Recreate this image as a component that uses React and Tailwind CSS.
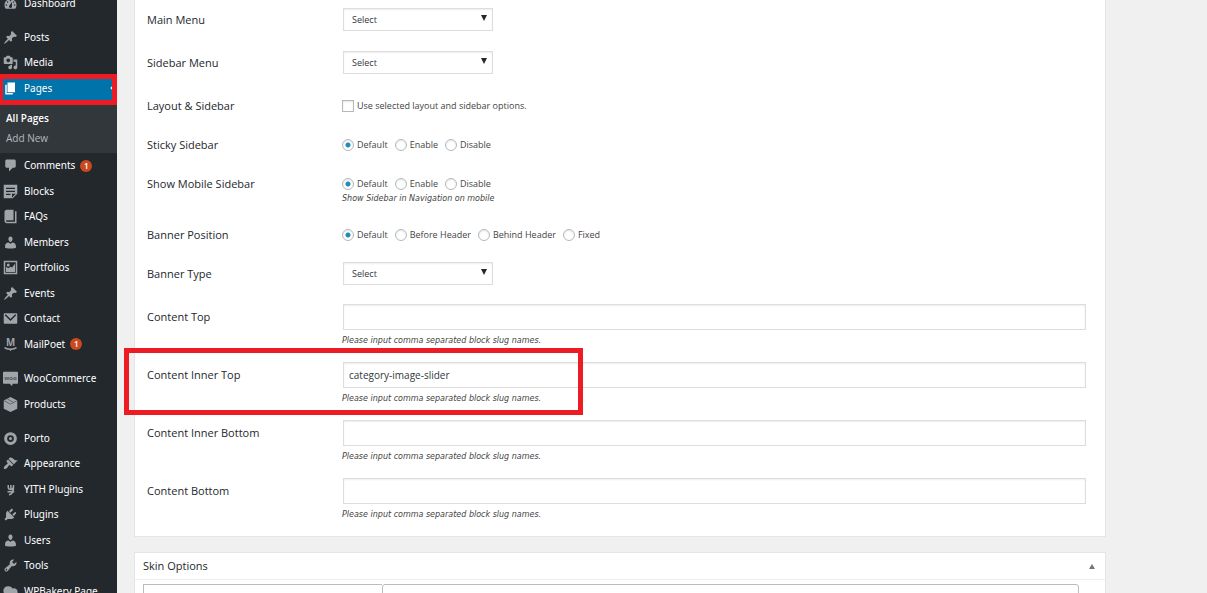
import { useState } from 'react';
import clsx from 'clsx';

const ICONS = {
  dashboard: (
    <path fillRule="evenodd" d="M3.76 17h12.48c1.1-1.37 1.76-3.11 1.76-5 0-4.42-3.58-8-8-8s-8 3.58-8 8c0 1.89.66 3.63 1.76 5zM10 5a1 1 0 110 2 1 1 0 010-2zM6 7a1 1 0 110 2 1 1 0 010-2zm8 0a1 1 0 110 2 1 1 0 010-2zm-5.4 5.5L12 8v6a2 2 0 11-3.400-1.500zM4.500 11a1 1 0 110 2 1 1 0 010-2zm11 0a1 1 0 110 2 1 1 0 010-2z" />
  ),
  pin: (
    <path d="M10.44 3.02l1.82-1.82 6.36 6.35-1.83 1.82c-1.05-.68-2.48-.57-3.41.36l-.75.75c-.92.93-1.04 2.35-.35 3.41l-1.83 1.82-2.41-2.41-2.8 2.79c-.42.42-3.38 2.71-3.8 2.29s1.86-3.39 2.28-3.81l2.79-2.79L4.1 9.36l1.83-1.82c1.05.69 2.48.57 3.4-.36l.75-.75c.93-.92 1.05-2.35.36-3.41z" />
  ),
  media: (
    <path d="M13 11V4c0-.55-.45-1-1-1h-1.67L9 1H5L3.67 3H2c-.55 0-1 .45-1 1v7c0 .55.45 1 1 1h10c.55 0 1-.45 1-1zM7 4.500c1.380 0 2.500 1.120 2.500 2.500S8.380 9.500 7 9.500 4.500 8.380 4.500 7 5.620 4.500 7 4.500zM14 6h5v10.500c0 1.380-1.120 2.500-2.500 2.500S14 17.880 14 16.500s1.120-2.500 2.500-2.500c.17 0 .34.02.5.05V9h-3V6zm-4 8.050V13h2v3.500c0 1.380-1.120 2.500-2.500 2.500S7 17.880 7 16.500 8.120 14 9.500 14c.17 0 .34.02.5.05z" fillRule="evenodd" />
  ),
  page: <path d="M6 15V2h10v13H6zm-1 1h8v2H3V5h2v11z" />,
  comment: (
    <path d="M5 2h10c1.100 0 2 .9 2 2v7c0 1.100-.9 2-2 2h-2l-5 5v-5H5c-1.100 0-2-.9-2-2V4c0-1.100.9-2 2-2z" />
  ),
  blocks: (
    <path fillRule="evenodd" d="M1 1h18v12l-6 6H1zM4 5v1.500h12V5zM4 9v1.500h12V9zM4 13v1.500h6V13zM12 13v5l5-5z" />
  ),
  book: (
    <path d="M16 3h2v16H5c-1.660 0-3-1.340-3-3V4c0-1.660 1.340-3 3-3h9v14H5c-.55 0-1 .45-1 1s.45 1 1 1h11V3z" />
  ),
  user: (
    <path d="M10 9.250c-2.270 0-2.730-3.440-2.730-3.440C7 4.020 7.820 2 9.970 2c2.160 0 2.980 2.020 2.710 3.810 0 0-.41 3.440-2.680 3.440zm0 2.570L12.720 10c2.390 0 4.520 2.330 4.520 4.530v2.490s-3.650 1.130-7.240 1.130c-3.650 0-7.240-1.130-7.240-1.130v-2.490c0-2.250 1.940-4.480 4.470-4.480z" />
  ),
  image: (
    <>
      <path fillRule="evenodd" d="M1 1h18v18H1zM3 3v14h14V3z" />
      <path d="M4 9l3 2 3-2 2 1 4-5v11H4z" />
      <circle cx="7" cy="6.500" r="2" />
    </>
  ),
  mail: (
    <>
      <rect x="1" y="3" width="18" height="14" rx="1" />
      <path d="M3 5l7 7 7-7" fill="none" stroke="#23282d" strokeWidth="2" />
    </>
  ),
  mailpoet: (
    <>
      <text x="10" y="12" textAnchor="middle" fontSize="13" fontWeight="700" fontFamily="Noto Sans, sans-serif">M</text>
      <path d="M2 14c3 3 13 3 16 0" fill="none" stroke="currentColor" strokeWidth="2" />
      <path d="M8 16h4l-2 3z" />
    </>
  ),
  woo: (
    <>
      <path d="M1 1h18q1 0 1 1v14q0 1-1 1h-6l-1 3-3-3H1q-1 0-1-1V2q0-1 1-1z" />
      <text x="10" y="12" textAnchor="middle" fontSize="8" fontWeight="700" fontFamily="Noto Sans, sans-serif" fill="#50575e">woo</text>
    </>
  ),
  box: (
    <>
      <path d="M10 0l9 4.500v11L10 20l-9-4.500v-11z" />
      <path d="M1.500 5l8.500 4.500L18.500 5M5.500 2.500l9 5" fill="none" stroke="#5b6168" strokeWidth="1.200" />
    </>
  ),
  porto: (
    <>
      <circle cx="10" cy="10" r="6.500" fill="none" stroke="currentColor" strokeWidth="4" />
      <circle cx="10" cy="10" r="2" />
    </>
  ),
  brush: (
    <path d="M14.480 11.060L7.410 3.990l1.500-1.500c.5-.56 2.300-.47 3.510.32 1.210.8 1.430 1.280 2.910 2.100 1.180.64 2.450 1.260 4.450.85zm-.71.71L6.700 4.700 4.930 6.470c-.39.39-.39 1.020 0 1.410l1.060 1.060c.39.39.39 1.030 0 1.420-.6.6-1.430 1.110-2.210 1.690-.35.26-.7.53-1.010.84C1.430 14.230.4 16.080 1.400 17.070c.99 1 2.840-.03 4.180-1.360.31-.31.58-.66.85-1.020.57-.78 1.080-1.610 1.690-2.210.39-.39 1.020-.39 1.410 0l1.060 1.060c.39.39 1.020.39 1.410 0z" />
  ),
  yith: (
    <path d="M7 4v3q0 3 3 3t4-3V4M14 7q0 9-6 10M6 13h9M10.500 4v5" fill="none" stroke="currentColor" strokeWidth="2" />
  ),
  plug: (
    <path d="M13.110 4.360L9.870 7.600 8 5.730l3.240-3.240c.35-.34 1.050-.2 1.560.32.52.51.66 1.210.31 1.550zm-8 1.770l.91-1.120 9.010 9.010-1.190.84c-.71.71-2.630 1.160-3.820 1.160H6.140L4.900 17.260c-.59.59-1.540.59-2.120 0-.59-.58-.59-1.530 0-2.120l1.240-1.240v-3.880c0-1.130.4-3.190 1.090-3.890zm7.260 3.970l3.240-3.240c.34-.35 1.040-.21 1.550.31.52.51.66 1.210.31 1.550l-3.240 3.250z" />
  ),
  wrench: (
    <path fillRule="evenodd" d="M16.680 9.770c-1.340 1.340-3.300 1.670-4.950.99l-5.410 6.520c-.99.99-2.590.99-3.580 0s-.99-2.590 0-3.570l6.520-5.420c-.68-1.650-.35-3.610.99-4.950 1.280-1.280 3.120-1.620 4.720-1.060l-2.890 2.890 2.820 2.820 2.860-2.870c.53 1.580.18 3.390-1.080 4.650zM3.810 16.210c.4.39 1.040.39 1.430 0 .4-.4.4-1.040 0-1.430-.39-.4-1.030-.4-1.430 0-.39.39-.39 1.030 0 1.430z" />
  ),
  bakery: (
    <path d="M7 3c3 0 4.500 1 5.500 3 4-1 7 1 7 5s-3 5-6 5c-1 0-2 2-4 2-1.500 0-2-2-3-3-4 0-6-2.500-6-6s2.500-6 6.500-6z" />
  ),
};

const MENU = [
  { rows: 'auto-rows-[26px_25px]', items: [{ icon: 'dashboard', label: 'Dashboard' }] },
  {
    rows: 'auto-rows-[26px_25px]',
    items: [
      { icon: 'pin', label: 'Posts' },
      { icon: 'media', label: 'Media' },
      { icon: 'page', label: 'Pages', active: true },
    ],
  },
  {
    rows: 'auto-rows-[25px_26px]',
    items: [
      { icon: 'comment', label: 'Comments', count: 1 },
      { icon: 'blocks', label: 'Blocks' },
      { icon: 'book', label: 'FAQs' },
      { icon: 'user', label: 'Members' },
      { icon: 'image', label: 'Portfolios' },
      { icon: 'pin', label: 'Events' },
      { icon: 'mail', label: 'Contact' },
      { icon: 'mailpoet', label: 'MailPoet', count: 1 },
    ],
  },
  {
    rows: 'auto-rows-[26px]',
    items: [
      { icon: 'woo', label: 'WooCommerce' },
      { icon: 'box', label: 'Products' },
    ],
  },
  {
    rows: 'auto-rows-[26px_25px]',
    items: [
      { icon: 'porto', label: 'Porto' },
      { icon: 'brush', label: 'Appearance' },
      { icon: 'yith', label: 'YITH Plugins' },
      { icon: 'plug', label: 'Plugins' },
      { icon: 'user', label: 'Users' },
      { icon: 'wrench', label: 'Tools' },
      { icon: 'bakery', label: 'WPBakery Page' },
    ],
  },
];

const POSITION_OPTIONS = ['Default', 'Before Header', 'Behind Header', 'Fixed'];
const TOGGLE_OPTIONS = ['Default', 'Enable', 'Disable'];
const SLUG_HINT = 'Please input comma separated block slug names.';

const MenuItem = ({ item }) => (
  <li className={clsx('relative', item.active && 'bg-[#0073aa]')}>
    <a href="#" className="flex h-full items-center gap-[5px] pl-[3px] text-white whitespace-nowrap">
      <svg
        viewBox="0 0 20 20"
        fill="currentColor"
        aria-hidden="true"
        className={clsx('size-[15px] shrink-0', item.active ? 'text-white' : 'text-[#a0a5aa]')}
      >
        {ICONS[item.icon]}
      </svg>
      <span className="pl-px">{item.label}</span>
      {item.count && (
        <span className="flex size-3 items-center justify-center rounded-full bg-[#ca4a1f] text-[8px] font-semibold">
          {item.count}
        </span>
      )}
    </a>
    {item.active && (
      <>
        <span className="absolute top-1/2 right-[2px] size-1 -translate-y-1/2 rotate-45 bg-[#f1f1f1]" />
        <span className="pointer-events-none absolute inset-x-0 -top-px -bottom-1 border-[5px] border-l-[3px] border-[#ed1c24]" />
      </>
    )}
  </li>
);

const Sidebar = () => (
  <nav className="-mt-[10px] flex w-[117px] shrink-0 flex-col bg-[#23282d] font-['Noto_Sans',sans-serif] text-[10px]">
    {MENU.map((group, i) => (
      <div key={i}>
        <ul className={clsx('grid', group.rows, i > 0 && i !== 2 && 'mt-2')}>
          {group.items.map((item) => (
            <MenuItem key={item.label} item={item} />
          ))}
        </ul>
        {i === 1 && (
          <ul className="bg-[#32373c] px-[6px] pt-[7px] pb-[5px] font-['Open_Sans',sans-serif] leading-5">
            <li>
              <a href="#" className="font-semibold text-white">All Pages</a>
            </li>
            <li>
              <a href="#" className="text-[#b4b9be]">Add New</a>
            </li>
          </ul>
        )}
      </div>
    ))}
  </nav>
);

const Row = ({ label, htmlFor, marked, className, labelClass, children }) => (
  <div className={clsx('relative flex pr-[19px] pl-3', className)}>
    <label htmlFor={htmlFor} className={clsx('w-[195px] shrink-0', labelClass)}>
      {label}
    </label>
    <div className="min-w-0 flex-1">{children}</div>
    {marked && (
      <span className="pointer-events-none absolute -top-1 -left-[11px] h-[67px] w-[459px] border-[5px] border-[#ed1c24]" />
    )}
  </div>
);

const Hint = ({ children, className }) => (
  <p className={clsx("font-['DejaVu_Sans',sans-serif] text-[8px] leading-3 text-[#444] italic", className)}>{children}</p>
);

const SelectRow = ({ label, id, className = 'py-[10px]' }) => (
  <Row label={label} htmlFor={id} className={className} labelClass="leading-[23px]">
    <div className="relative ml-px w-[150px]">
      <select
        id={id}
        className="block h-[23px] w-full appearance-none border border-[#ddd] bg-white pl-2 text-[9px] text-[#32373c] shadow-[inset_0_1px_2px_rgba(0,0,0,0.07)]"
      >
        <option>Select</option>
      </select>
      <svg viewBox="0 0 6 6" className="pointer-events-none absolute top-[7px] right-[6px] size-[6px]" aria-hidden="true">
        <path d="M0 0h6L3 6z" fill="#23282d" />
      </svg>
    </div>
  </Row>
);

const RadioRow = ({ label, name, options, hint }) => {
  const [value, setValue] = useState(options[0]);

  return (
    <Row label={label} className="py-[10px]" labelClass="leading-[19px]">
      <div className="flex h-[19px] items-center gap-[7px]" role="radiogroup" aria-label={label}>
        {options.map((opt) => (
          <label key={opt} className="flex items-center gap-[3px] text-[9px] whitespace-nowrap text-[#444]">
            <input
              type="radio"
              name={name}
              checked={value === opt}
              onChange={() => setValue(opt)}
              className="size-3 appearance-none rounded-full border border-[#b4b9be] bg-white shadow-[inset_0_1px_2px_rgba(0,0,0,0.1)] checked:bg-[radial-gradient(circle,#1e8cbe_2px,transparent_3px)]"
            />
            {opt}
          </label>
        ))}
      </div>
      {hint && <Hint>{hint}</Hint>}
    </Row>
  );
};

const TextRow = ({ label, id, value = '', marked }) => (
  <Row label={label} htmlFor={id} marked={marked} className="pt-[10px] pb-[5px]" labelClass="leading-[26px]">
    <div className="pl-px">
      <input
        id={id}
        type="text"
        defaultValue={value}
        className="block h-[26px] w-full border border-[#ddd] bg-white px-[5px] text-[10px] text-[#32373c] shadow-[inset_0_1px_2px_rgba(0,0,0,0.07)]"
      />
    </div>
    <Hint className="mt-[5px]">{SLUG_HINT}</Hint>
  </Row>
);

const App = () => {
  return (
    <div className="flex h-screen overflow-hidden bg-[#f0f0f0] font-['Open_Sans',sans-serif] text-[11px] text-[#23282d]">
      <Sidebar />
      <main className="-mt-[2px] mr-[101px] ml-[17px] min-w-0 flex-1">
        <section className="border-x border-b border-[#e5e5e5] bg-white pb-[10px]">
          <SelectRow label="Main Menu" id="main-menu" />
          <SelectRow label="Sidebar Menu" id="sidebar-menu" />
          <Row label="Layout & Sidebar" htmlFor="layout" className="pt-[11px] pb-2" labelClass="leading-[22px]">
            <label className="flex h-[22px] items-center gap-[3px] text-[9px] text-[#444]">
              <input
                id="layout"
                type="checkbox"
                className="size-3 appearance-none border border-[#b4b9be] bg-white shadow-[inset_0_1px_2px_rgba(0,0,0,0.1)] checked:bg-[#1e8cbe]"
              />
              Use selected layout and sidebar options.
            </label>
          </Row>
          <RadioRow label="Sticky Sidebar" name="sticky" options={TOGGLE_OPTIONS} />
          <RadioRow label="Show Mobile Sidebar" name="mobile" options={TOGGLE_OPTIONS} hint="Show Sidebar in Navigation on mobile" />
          <RadioRow label="Banner Position" name="position" options={POSITION_OPTIONS} />
          <SelectRow label="Banner Type" id="banner-type" className="pt-2 pb-[9px]" />
          <TextRow label="Content Top" id="content-top" />
          <TextRow label="Content Inner Top" id="content-inner-top" value="category-image-slider" marked />
          <TextRow label="Content Inner Bottom" id="content-inner-bottom" />
          <TextRow label="Content Bottom" id="content-bottom" />
        </section>

        <section className="mt-[15px] border border-[#e5e5e5] bg-white">
          <header className="flex h-[27px] items-center justify-between border-b border-[#eee] pr-[10px] pl-2">
            <h2>Skin Options</h2>
            <button type="button" aria-label="Toggle panel">
              <svg viewBox="0 0 6 5" className="h-[5px] w-[6px]" aria-hidden="true">
                <path d="M3 0l3 5H0z" fill="#72777c" />
              </svg>
            </button>
          </header>
          <div className="mt-1 mr-[26px] ml-2 flex h-[60px]">
            <div className="w-[239px] border-t border-l border-[#bbb]" />
            <div className="flex-1 rounded-t-[3px] border border-[#bbb]" />
          </div>
        </section>
      </main>
    </div>
  );
};

export default App;
